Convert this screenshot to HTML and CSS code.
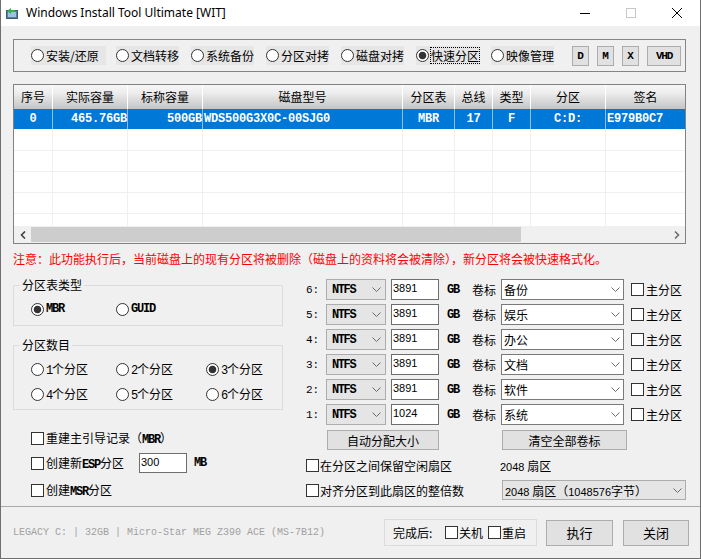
FILE: index.html
```html
<!DOCTYPE html>
<html lang="zh-CN">
<head>
<meta charset="utf-8">
<title>Windows Install Tool Ultimate [WIT]</title>
<link rel="stylesheet" href="styles.css">
</head>
<body>
<div class="window">
  <div class="titlebar">
    <svg class="app-icon" width="12" height="11" viewBox="0 0 12 11">
      <rect x="0.5" y="2.5" width="11" height="8" fill="#5e7f9c" stroke="#3d5a75"/>
      <rect x="2" y="4" width="8" height="5" fill="#9cc3e0"/>
      <path d="M1 3 L5 0 L5 2 L9 2 L9 4 L5 4 L5 6 Z" fill="#2fb44a"/>
    </svg>
    <span class="title">Windows Install Tool Ultimate [WIT]</span>
    <div class="caption">
      <span class="cap"><svg width="10" height="10" viewBox="0 0 10 10"><path d="M0 5.5H10" stroke="#000" stroke-width="1"/></svg></span>
      <span class="cap"><svg width="10" height="10" viewBox="0 0 10 10"><rect x="0.5" y="0.5" width="9" height="9" fill="none" stroke="#c8c8c8"/></svg></span>
      <span class="cap"><svg width="10" height="10" viewBox="0 0 10 10"><path d="M0 0L10 10M10 0L0 10" stroke="#000" stroke-width="1"/></svg></span>
    </div>
  </div>

  <div class="client">
    <div class="modes">
      <label class="mode mode-wide"><span class="radio"></span><span class="mlabel">安装/还原</span></label>
      <label class="mode"><span class="radio"></span><span class="mlabel">文档转移</span></label>
      <label class="mode"><span class="radio"></span><span class="mlabel">系统备份</span></label>
      <label class="mode"><span class="radio"></span><span class="mlabel">分区对拷</span></label>
      <label class="mode"><span class="radio"></span><span class="mlabel">磁盘对拷</span></label>
      <label class="mode"><span class="radio checked"></span><span class="mlabel focus">快速分区</span></label>
      <label class="mode mode-last"><span class="radio"></span><span class="mlabel">映像管理</span></label>
      <div class="disk-btns">
        <span class="mini">D</span>
        <span class="mini">M</span>
        <span class="mini">X</span>
        <span class="mini mini-wide">VHD</span>
      </div>
    </div>

    <div class="grid">
      <div class="ghead">
        <div class="c w1">序号</div>
        <div class="c w2">实际容量</div>
        <div class="c w3">标称容量</div>
        <div class="c w4">磁盘型号</div>
        <div class="c w5">分区表</div>
        <div class="c w6">总线</div>
        <div class="c w7">类型</div>
        <div class="c w8">分区</div>
        <div class="c w9">签名</div>
      </div>
      <div class="gbody">
        <div class="row sel">
          <div class="c w1 ac">0</div>
          <div class="c w2 ar">465.76GB</div>
          <div class="c w3 ar">500GB</div>
          <div class="c w4 al">WDS500G3X0C-00SJG0</div>
          <div class="c w5 ac">MBR</div>
          <div class="c w6 ac">17</div>
          <div class="c w7 ac">F</div>
          <div class="c w8 ac">C:D:</div>
          <div class="c w9 al">E979B0C7</div>
        </div>
        <div class="row"><div class="c w1"></div><div class="c w2"></div><div class="c w3"></div><div class="c w4"></div><div class="c w5"></div><div class="c w6"></div><div class="c w7"></div><div class="c w8"></div><div class="c w9"></div></div>
        <div class="row"><div class="c w1"></div><div class="c w2"></div><div class="c w3"></div><div class="c w4"></div><div class="c w5"></div><div class="c w6"></div><div class="c w7"></div><div class="c w8"></div><div class="c w9"></div></div>
        <div class="row"><div class="c w1"></div><div class="c w2"></div><div class="c w3"></div><div class="c w4"></div><div class="c w5"></div><div class="c w6"></div><div class="c w7"></div><div class="c w8"></div><div class="c w9"></div></div>
        <div class="row"><div class="c w1"></div><div class="c w2"></div><div class="c w3"></div><div class="c w4"></div><div class="c w5"></div><div class="c w6"></div><div class="c w7"></div><div class="c w8"></div><div class="c w9"></div></div>
        <div class="row"><div class="c w1"></div><div class="c w2"></div><div class="c w3"></div><div class="c w4"></div><div class="c w5"></div><div class="c w6"></div><div class="c w7"></div><div class="c w8"></div><div class="c w9"></div></div>
      </div>
      <div class="hscroll">
        <span class="sb-btn"><svg width="6" height="8" viewBox="0 0 6 8"><path d="M5 0.5 L1.5 4 L5 7.5" fill="none" stroke="#404040" stroke-width="1.6"/></svg></span>
        <span class="sb-thumb"></span>
        <span class="sb-track"></span>
        <span class="sb-btn"><svg width="6" height="8" viewBox="0 0 6 8"><path d="M1 0.5 L4.5 4 L1 7.5" fill="none" stroke="#707070" stroke-width="1.6"/></svg></span>
      </div>
    </div>

    <p class="warn">注意：此功能执行后，当前磁盘上的现有分区将被删除（磁盘上的资料将会被清除），新分区将会被快速格式化。</p>

    <div class="panels">
      <div class="left">
        <fieldset class="group">
          <legend>分区表类型</legend>
          <div class="opt-row">
            <label class="opt ow1"><span class="radio checked"></span><span class="mono b">MBR</span></label>
            <label class="opt"><span class="radio"></span><span class="mono b">GUID</span></label>
          </div>
        </fieldset>
        <fieldset class="group group2">
          <legend>分区数目</legend>
          <div class="opt-row">
            <label class="opt ow1"><span class="radio"></span><span><span class="mono">1</span>个分区</span></label>
            <label class="opt ow2"><span class="radio"></span><span><span class="mono">2</span>个分区</span></label>
            <label class="opt"><span class="radio checked"></span><span><span class="mono">3</span>个分区</span></label>
          </div>
          <div class="opt-row row-gap">
            <label class="opt ow1"><span class="radio"></span><span><span class="mono">4</span>个分区</span></label>
            <label class="opt ow2"><span class="radio"></span><span><span class="mono">5</span>个分区</span></label>
            <label class="opt"><span class="radio"></span><span><span class="mono">6</span>个分区</span></label>
          </div>
        </fieldset>
        <div class="chk-row chk-first">
          <span class="check"></span><span class="clabel">重建主引导记录（<span class="mono b">MBR</span>）</span>
        </div>
        <div class="chk-row chk-second">
          <span class="check"></span><span class="clabel esp">创建新<span class="mono b">ESP</span>分区</span>
          <span class="field">300</span>
          <span class="unit mono b">MB</span>
        </div>
        <div class="chk-row chk-third">
          <span class="check"></span><span class="clabel">创建<span class="mono b">MSR</span>分区</span>
        </div>
      </div>

      <div class="right">
        <div class="prow">
          <span class="pnum">6:</span>
          <span class="combo fs"><span>NTFS</span><svg width="9" height="5" viewBox="0 0 9 5"><path d="M0.5 0.5 L4.5 4.5 L8.5 0.5" fill="none" stroke="#6a6a6a"/></svg></span>
          <span class="field">3891</span>
          <span class="unit mono b">GB</span>
          <span class="vlabel">卷标</span>
          <span class="combo vol"><span>备份</span><svg width="9" height="5" viewBox="0 0 9 5"><path d="M0.5 0.5 L4.5 4.5 L8.5 0.5" fill="none" stroke="#6a6a6a"/></svg></span>
          <span class="check pchk"></span><span class="plabel">主分区</span>
        </div>
        <div class="prow">
          <span class="pnum">5:</span>
          <span class="combo fs"><span>NTFS</span><svg width="9" height="5" viewBox="0 0 9 5"><path d="M0.5 0.5 L4.5 4.5 L8.5 0.5" fill="none" stroke="#6a6a6a"/></svg></span>
          <span class="field">3891</span>
          <span class="unit mono b">GB</span>
          <span class="vlabel">卷标</span>
          <span class="combo vol"><span>娱乐</span><svg width="9" height="5" viewBox="0 0 9 5"><path d="M0.5 0.5 L4.5 4.5 L8.5 0.5" fill="none" stroke="#6a6a6a"/></svg></span>
          <span class="check pchk"></span><span class="plabel">主分区</span>
        </div>
        <div class="prow">
          <span class="pnum">4:</span>
          <span class="combo fs"><span>NTFS</span><svg width="9" height="5" viewBox="0 0 9 5"><path d="M0.5 0.5 L4.5 4.5 L8.5 0.5" fill="none" stroke="#6a6a6a"/></svg></span>
          <span class="field">3891</span>
          <span class="unit mono b">GB</span>
          <span class="vlabel">卷标</span>
          <span class="combo vol"><span>办公</span><svg width="9" height="5" viewBox="0 0 9 5"><path d="M0.5 0.5 L4.5 4.5 L8.5 0.5" fill="none" stroke="#6a6a6a"/></svg></span>
          <span class="check pchk"></span><span class="plabel">主分区</span>
        </div>
        <div class="prow">
          <span class="pnum">3:</span>
          <span class="combo fs"><span>NTFS</span><svg width="9" height="5" viewBox="0 0 9 5"><path d="M0.5 0.5 L4.5 4.5 L8.5 0.5" fill="none" stroke="#6a6a6a"/></svg></span>
          <span class="field">3891</span>
          <span class="unit mono b">GB</span>
          <span class="vlabel">卷标</span>
          <span class="combo vol"><span>文档</span><svg width="9" height="5" viewBox="0 0 9 5"><path d="M0.5 0.5 L4.5 4.5 L8.5 0.5" fill="none" stroke="#6a6a6a"/></svg></span>
          <span class="check pchk"></span><span class="plabel">主分区</span>
        </div>
        <div class="prow">
          <span class="pnum">2:</span>
          <span class="combo fs"><span>NTFS</span><svg width="9" height="5" viewBox="0 0 9 5"><path d="M0.5 0.5 L4.5 4.5 L8.5 0.5" fill="none" stroke="#6a6a6a"/></svg></span>
          <span class="field">3891</span>
          <span class="unit mono b">GB</span>
          <span class="vlabel">卷标</span>
          <span class="combo vol"><span>软件</span><svg width="9" height="5" viewBox="0 0 9 5"><path d="M0.5 0.5 L4.5 4.5 L8.5 0.5" fill="none" stroke="#6a6a6a"/></svg></span>
          <span class="check pchk"></span><span class="plabel">主分区</span>
        </div>
        <div class="prow">
          <span class="pnum">1:</span>
          <span class="combo fs"><span>NTFS</span><svg width="9" height="5" viewBox="0 0 9 5"><path d="M0.5 0.5 L4.5 4.5 L8.5 0.5" fill="none" stroke="#6a6a6a"/></svg></span>
          <span class="field">1024</span>
          <span class="unit mono b">GB</span>
          <span class="vlabel">卷标</span>
          <span class="combo vol"><span>系统</span><svg width="9" height="5" viewBox="0 0 9 5"><path d="M0.5 0.5 L4.5 4.5 L8.5 0.5" fill="none" stroke="#6a6a6a"/></svg></span>
          <span class="check pchk"></span><span class="plabel">主分区</span>
        </div>
        <div class="btn-row">
          <span class="btn btn-auto">自动分配大小</span>
          <span class="btn btn-clear">清空全部卷标</span>
        </div>
        <div class="rchk">
          <span class="check"></span><span class="rlabel">在分区之间保留空闲扇区</span>
          <span class="sectors"><span class="num">2048</span> 扇区</span>
        </div>
        <div class="rchk">
          <span class="check"></span><span class="rlabel rlabel2">对齐分区到此扇区的整倍数</span>
          <span class="combo align"><span><span class="num">2048</span> 扇区（<span class="num">1048576</span>字节）</span><svg width="9" height="5" viewBox="0 0 9 5"><path d="M0.5 0.5 L4.5 4.5 L8.5 0.5" fill="none" stroke="#6a6a6a"/></svg></span>
        </div>
      </div>
    </div>
  </div>

  <div class="footer">
    <span class="sysinfo">LEGACY C: | 32GB | Micro-Star MEG Z390 ACE (MS-7B12)</span>
    <div class="finish">
      <span class="finish-label">完成后:</span>
      <span class="check"></span><span class="flabel">关机</span>
      <span class="check fchk2"></span><span class="flabel">重启</span>
    </div>
    <span class="btn btn-big">执行</span>
    <span class="btn btn-big btn-close">关闭</span>
  </div>
</div>
</body>
</html>
```

FILE: styles.css
```css
* { box-sizing: border-box; }
html, body { margin: 0; padding: 0; }
body {
  background: #ffffff;
  font-family: "Noto Sans CJK SC", "Noto Sans", sans-serif;
  font-size: 12px;
  color: #000;
}

.window {
  width: 701px;
  height: 559px;
  background: #f0f0f0;
  border: 1px solid #6f6f6f;
  border-top: 0;
  display: flex;
  flex-direction: column;
  overflow: hidden;
}

/* title bar */
.titlebar {
  height: 26px;
  flex: none;
  background: #ffffff;
  display: flex;
  align-items: center;
}
.app-icon { margin-left: 5px; flex: none; }
.title {
  margin-left: 8px;
  font-family: "Noto Sans", "Liberation Sans", sans-serif;
  font-size: 12px;
  line-height: 16px;
}
.caption { margin-left: auto; display: flex; height: 26px; }
.cap { width: 46px; display: flex; align-items: center; justify-content: center; }

/* client area */
.client { height: 480px; flex: none; }

.modes {
  margin: 13px 0 0 12px;
  width: 673px;
  height: 33px;
  border: 1px solid #858585;
  display: flex;
  align-items: center;
  padding: 0 4px 0 17px;
}
.mode {
  display: flex;
  align-items: center;
  height: 19px;
  width: 63px;
  margin-right: 12px;
  background: #e6e6e6;
  white-space: nowrap;
}
.mode-wide { width: 75px; margin-right: 10px; }
.mode-last { margin-right: 0; }
.mlabel { margin-left: 2px; line-height: 15px; }
.focus { outline: 1px dotted #000; outline-offset: 0; }

.radio {
  width: 13px;
  height: 13px;
  flex: none;
  border: 1px solid #333;
  border-radius: 50%;
  background: #fff;
}
.radio.checked { background: radial-gradient(circle, #333 0, #333 3.4px, #fff 4.2px); }

.disk-btns { margin-left: auto; display: flex; gap: 8px; }
.mini {
  width: 17px;
  height: 20px;
  border: 1px solid #adadad;
  background: #e1e1e1;
  display: flex;
  align-items: center;
  justify-content: center;
  font: bold 11px "Liberation Mono", monospace;
}
.mini-wide { width: 34px; letter-spacing: -1.2px; }

/* list view */
.grid {
  margin: 12px 0 0 12px;
  width: 673px;
  height: 160px;
  border: 1px solid #828282;
  background: #fff;
  display: flex;
  flex-direction: column;
  overflow: hidden;
}
.ghead {
  display: flex;
  height: 24px;
  flex: none;
  background: linear-gradient(#f7f7f7 0%, #ececec 35%, #d6d6d6 70%, #c4c4c4 100%);
}
.ghead .c {
  border-right: 1px solid #ffffff;
  text-align: center;
  line-height: 24px;
}
.c { flex: none; height: 100%; white-space: nowrap; overflow: hidden; }
.w1 { width: 39px; }
.w2 { width: 75px; }
.w3 { width: 75px; }
.w4 { width: 200px; }
.w5 { width: 52px; }
.w6 { width: 38px; }
.w7 { width: 38px; }
.w8 { width: 75px; }
.w9 { width: 79px; border-right: 0 !important; }

.gbody { height: 117px; flex: none; overflow: hidden; }
.row {
  display: flex;
  height: 21px;
  border-bottom: 1px solid #f0f0f0;
}
.row .c { border-right: 1px solid #f0f0f0; }
.row.sel {
  background: #0078d7;
  color: #fff;
  border-bottom-color: #ffffff;
  font: bold 12px "Liberation Mono", monospace;
  letter-spacing: -0.2px;
  line-height: 20px;
}
.row.sel .c { border-right-color: #8fbfe8; }
.ac { text-align: center; }
.ar { text-align: right; padding-right: 0; }
.al { text-align: left; padding-left: 1px; }

.hscroll { height: 17px; flex: none; display: flex; background: #f0f0f0; }
.sb-btn { width: 17px; flex: none; display: flex; align-items: center; justify-content: center; }
.sb-thumb { width: 490px; flex: none; margin: 1px 0; background: #cdcdcd; }
.sb-track { flex: 1; }

.warn {
  margin: 7px 0 0 12px;
  color: #ff0000;
  font-size: 12px;
  line-height: 16px;
  white-space: nowrap;
}

/* lower panels */
.panels { height: 239px; display: flex; padding-left: 12px; }
.left { width: 270px; flex: none; }
.right { margin-left: 23px; margin-top: 12px; }

.group {
  margin: 10px 0 0 0;
  padding: 8px 0 8px 6px;
  border: 1px solid #dcdcdc;
  min-width: 0;
  width: 270px;
}
.group2 { margin-top: 11px; padding-bottom: 7px; }
.group legend {
  padding: 0 2px;
  line-height: 16px;
  font-size: 12px;
}
.opt-row { display: flex; align-items: center; height: 16px; margin-left: 11px; }
.row-gap { margin-top: 9px; }
.opt { display: flex; align-items: center; white-space: nowrap; }
.opt > span:last-child { margin-left: 2px; }
.ow1 { width: 85px; }
.ow2 { width: 90px; }

.mono { font-family: "Liberation Mono", monospace; font-size: 12px; letter-spacing: -1.2px; }
.b { font-weight: bold; }

.check {
  width: 13px;
  height: 13px;
  flex: none;
  border: 1px solid #333;
  background: #fff;
}

.chk-row { display: flex; align-items: center; height: 20px; margin-left: 18px; white-space: nowrap; }
.chk-first { margin-top: 18px; }
.chk-second { margin-top: 5px; }
.chk-third { margin-top: 7px; }
.clabel { margin-left: 2px; }
.esp { width: 93px; }

.field {
  width: 48px;
  height: 21px;
  flex: none;
  background: #fff;
  border: 1px solid #6e6e6e;
  padding: 1px 1px;
  font-family: "Liberation Sans", sans-serif;
  font-size: 11px;
  line-height: 14px;
}
.chk-second .field { height: 20px; }
.chk-second .unit { margin-left: 7px; }

.prow { display: flex; align-items: center; height: 21px; white-space: nowrap; }
.prow + .prow { margin-top: 4px; }
.pnum { width: 20px; flex: none; font: 11px "Liberation Mono", monospace; }
.combo {
  height: 21px;
  flex: none;
  display: flex;
  align-items: center;
  justify-content: space-between;
}
.combo.fs {
  width: 60px;
  background: #e5e5e5;
  border: 1px solid #adadad;
  padding: 0 4px 0 5px;
  font: bold 12px "Liberation Mono", monospace;
  letter-spacing: -1.4px;
}
.prow .field { margin-left: 5px; }
.unit { width: 25px; flex: none; }
.prow .unit { margin-left: 8px; }
.vlabel { width: 24px; flex: none; }
.combo.vol {
  width: 123px;
  margin-left: 5px;
  background: #fff;
  border: 1px solid #7a7a7a;
  padding: 0 3px 0 2px;
}
.pchk { margin-left: 7px; }
.plabel { margin-left: 2px; }

.btn {
  height: 20px;
  border: 1px solid #adadad;
  background: #e1e1e1;
  display: flex;
  align-items: center;
  justify-content: center;
  flex: none;
  white-space: nowrap;
}
.btn-row { display: flex; margin-top: 5px; }
.btn-auto { margin-left: 21px; width: 112px; }
.btn-clear { margin-left: 63px; width: 125px; }

.rchk { display: flex; align-items: center; height: 20px; margin-top: 5px; white-space: nowrap; }
.rlabel { margin-left: 1px; width: 180px; flex: none; }
.rlabel2 { width: 182px; }
.num { font-family: "Liberation Sans", sans-serif; font-size: 11px; }
.combo.align {
  width: 184px;
  height: 20px;
  background: #e5e5e5;
  border: 1px solid #adadad;
  padding: 0 3px 0 2px;
}

/* footer */
.footer {
  height: 52px;
  flex: none;
  border-top: 1px solid #a9a9a9;
  display: flex;
  align-items: center;
  padding: 0 11px 0 12px;
}
.sysinfo {
  flex: 1;
  color: #a0a0a0;
  font: 10px "Liberation Mono", monospace;
  white-space: nowrap;
}
.finish {
  width: 153px;
  height: 27px;
  border: 1px solid #dcdcdc;
  display: flex;
  align-items: center;
  padding-left: 8px;
  margin-right: 9px;
  white-space: nowrap;
}
.finish-label { width: 52px; flex: none; }
.flabel { margin-left: 1px; }
.fchk2 { margin-left: 5px; }
.btn-big { width: 67px; height: 26px; font-size: 13px; }
.btn-close { width: 66px; margin-left: 10px; }
```
